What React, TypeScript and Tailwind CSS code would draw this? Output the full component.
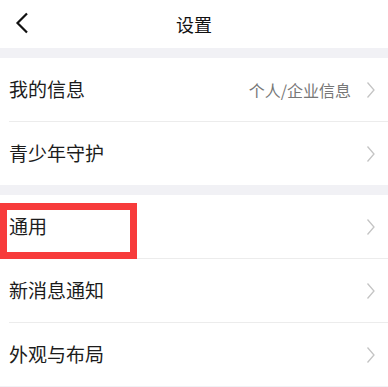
import { ReactNode } from "react";

const font = { fontFamily: '"Noto Sans CJK SC", "Noto Sans", sans-serif' };

function Chevron() {
  return (
    <svg width="9" height="18" viewBox="0 0 9 18" fill="none" className="shrink-0">
      <path d="M1.5 1.5 L8 9 L1.5 16.5" stroke="#c4c4c4" strokeWidth="1.3" />
    </svg>
  );
}

function Row({
  label,
  extra,
  divider,
  children,
}: {
  label: string;
  extra?: string;
  divider?: boolean;
  children?: ReactNode;
}) {
  return (
    <div className="relative bg-white">
      <div className="h-[63px] flex items-center pl-[9px] pr-[13px]">
        <span className="text-[19px] text-[#1c1c1c] flex-1">{label}</span>
        {extra && <span className="text-[16px] text-[#777] mr-[15px]">{extra}</span>}
        <Chevron />
      </div>
      {divider && <div className="ml-[9px] h-px bg-[#ececec]" />}
      {children}
    </div>
  );
}

export default function App() {
  return (
    <div className="w-[388px] h-[387px] overflow-hidden bg-[#f1f1f5]" style={font}>
      {/* Header */}
      <header className="relative h-[48px] bg-white flex items-center justify-center">
        <svg
          width="14"
          height="22"
          viewBox="0 0 14 22"
          fill="none"
          className="absolute left-[15px] top-[12px]"
        >
          <path d="M12 1.5 L2.5 11 L12 20.5" stroke="#111" strokeWidth="2.2" />
        </svg>
        <h1 className="text-[18px] text-[#111]">设置</h1>
      </header>

      <div className="h-[10px]" />

      <section>
        <Row label="我的信息" extra="个人/企业信息" divider />
        <Row label="青少年守护" />
      </section>

      <div className="h-[10px]" />

      <section>
        <Row label="通用" divider>
          <div className="absolute left-0 top-[8px] w-[137px] h-[56px] border-[7px] border-[#f73b3b]" />
        </Row>
        <Row label="新消息通知" divider />
        <Row label="外观与布局" />
      </section>
    </div>
  );
}
